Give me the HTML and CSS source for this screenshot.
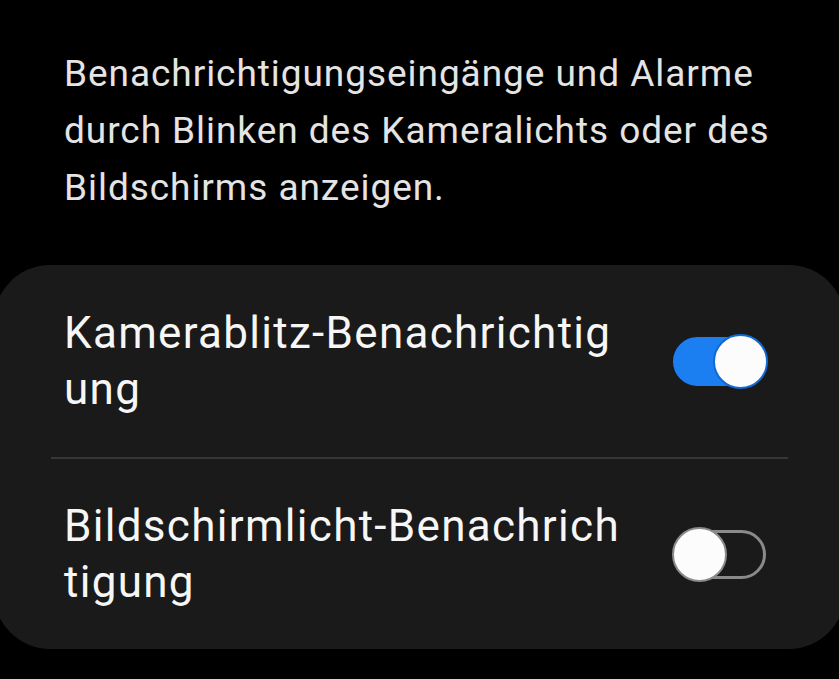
FILE: index.html
```html
<!DOCTYPE html>
<html lang="de">
<head>
    <meta charset="UTF-8">
    <meta name="viewport" content="width=device-width, initial-scale=1.0">
    <title>Blitzbenachrichtigung</title>
    <link rel="stylesheet" href="styles.css">
</head>
<body>
    <p class="intro">Benachrichtigungseingänge und Alarme durch Blinken des Kameralichts oder des Bildschirms anzeigen.</p>

    <div class="card">
        <div class="row">
            <div class="row-title">Kamerablitz-Benachrichtigung</div>
            <span class="switch on"><span class="knob"></span></span>
        </div>
        <div class="divider"></div>
        <div class="row">
            <div class="row-title">Bildschirmlicht-Benachrichtigung</div>
            <span class="switch"><span class="knob"></span></span>
        </div>
    </div>
</body>
</html>
```

FILE: styles.css
```css
body {
    margin: 0;
    background-color: #000;
    font-family: Roboto, "Noto Sans", sans-serif;
    overflow: hidden;
}
.intro {
    margin: 0;
    padding: 45px 40px 0 64px;
    color: #e4e4e4;
    font-size: 37px;
    line-height: 57px;
    letter-spacing: 0.95px;
}
.card {
    margin: 49px -6px 0 -6px;
    background-color: #1a1a1a;
    border-radius: 56px;
}
.row {
    display: flex;
    align-items: center;
    justify-content: space-between;
    height: 192px;
    padding: 0 79px 0 70px;
}
.row + .divider + .row {
    height: 190px;
}
.row-title {
    width: 562px;
    color: #f6f6f6;
    font-size: 44px;
    line-height: 56px;
    letter-spacing: 1.3px;
    word-break: break-all;
}
.divider {
    height: 2px;
    margin: 0 57px;
    background-color: #363636;
}
.switch {
    position: relative;
    width: 93px;
    height: 49px;
    border-radius: 25px;
    box-sizing: border-box;
    border: 3px solid #8a8a8a;
    flex-shrink: 0;
}
.switch .knob {
    position: absolute;
    top: -6px;
    left: -4px;
    width: 55px;
    height: 55px;
    box-sizing: border-box;
    border-radius: 50%;
    background-color: #fcfcfc;
    border: 2px solid #8a8a8a;
}
.switch.on {
    background-color: #1b7ff2;
    border-color: #1b7ff2;
}
.switch.on .knob {
    left: auto;
    right: -5px;
    border-color: #0f6ad6;
}
```
